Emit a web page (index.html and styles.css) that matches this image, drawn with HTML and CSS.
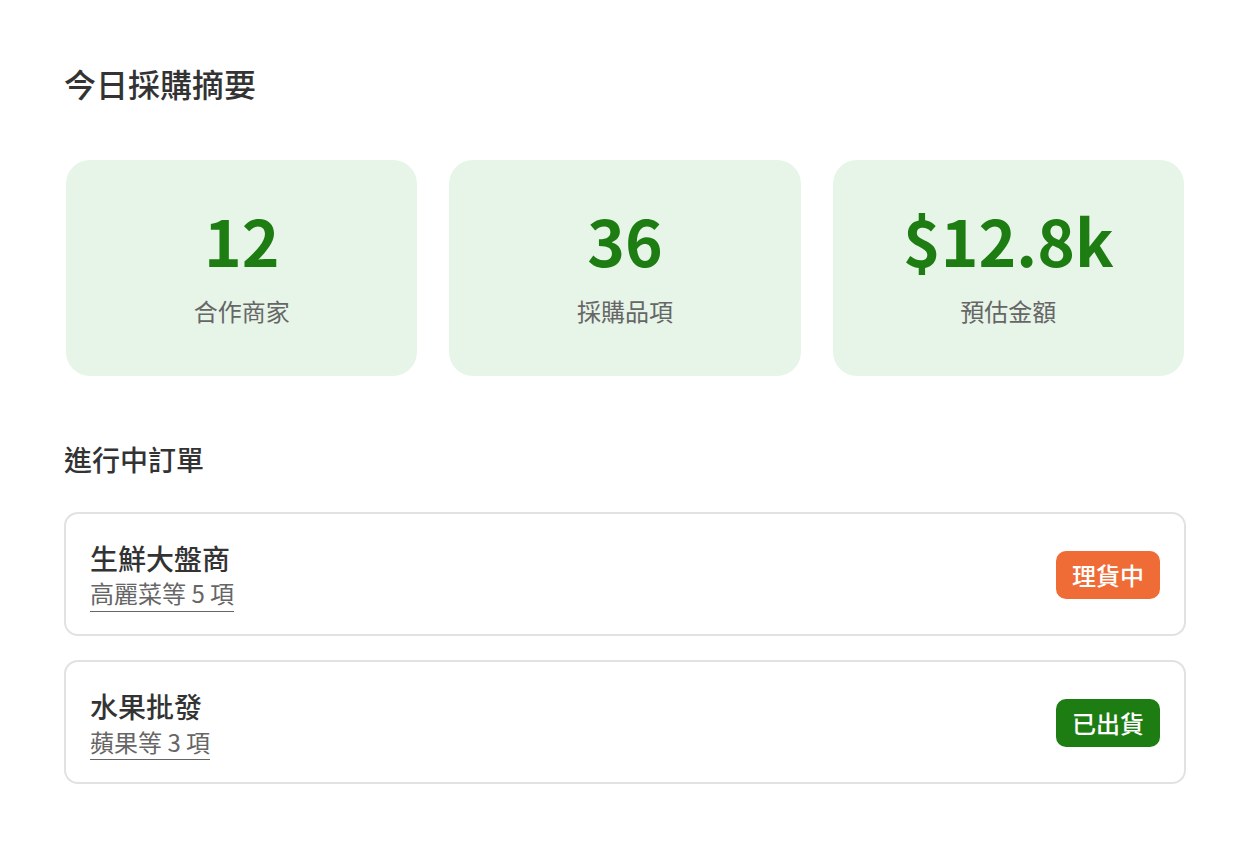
FILE: index.html
```html
<!DOCTYPE html>
<html lang="zh-Hant">
<head>
<meta charset="utf-8">
<title>今日採購摘要</title>
<link rel="stylesheet" href="styles.css">
</head>
<body>
<main class="page">
  <h1 class="title">今日採購摘要</h1>
  <section class="stats">
    <div class="stat">
      <div class="stat-value">12</div>
      <div class="stat-label">合作商家</div>
    </div>
    <div class="stat">
      <div class="stat-value">36</div>
      <div class="stat-label">採購品項</div>
    </div>
    <div class="stat">
      <div class="stat-value">$12.8k</div>
      <div class="stat-label">預估金額</div>
    </div>
  </section>
  <h2 class="section-title">進行中訂單</h2>
  <section class="orders">
    <div class="order">
      <div class="order-info">
        <div class="order-name">生鮮大盤商</div>
        <div class="order-items">高麗菜等 5 項</div>
      </div>
      <span class="badge badge-packing">理貨中</span>
    </div>
    <div class="order">
      <div class="order-info">
        <div class="order-name">水果批發</div>
        <div class="order-items">蘋果等 3 項</div>
      </div>
      <span class="badge badge-shipped">已出貨</span>
    </div>
  </section>
</main>
</body>
</html>
```

FILE: styles.css
```css
* { box-sizing: border-box; }
html, body { margin: 0; padding: 0; background: #ffffff; }
body {
  font-family: "Noto Sans CJK TC", "Noto Sans", sans-serif;
  color: #333333;
}
.page {
  padding: 64px 64px;
}
.title {
  margin: 0 0 58px 0;
  font-size: 32px;
  line-height: 1.2;
  font-weight: 500;
  color: #333333;
}
.stats {
  display: grid;
  grid-template-columns: repeat(3, 1fr);
  gap: 32px;
  padding: 0 2px;
}
.stat {
  background: #e6f5e8;
  border-radius: 24px;
  height: 216px;
  padding-bottom: 8px;
  display: flex;
  flex-direction: column;
  align-items: center;
  justify-content: center;
  gap: 16px;
}
.stat-value {
  font-size: 64px;
  line-height: 1.2;
  font-weight: 700;
  color: #1e7d12;
}
.stat-label {
  font-size: 24px;
  line-height: 1.4;
  color: #666666;
}
.section-title {
  margin: 64px 0 32px 0;
  font-size: 28px;
  line-height: 1.4;
  font-weight: 500;
  color: #333333;
}
.orders {
  display: flex;
  flex-direction: column;
  gap: 24px;
}
.order {
  display: flex;
  align-items: center;
  justify-content: space-between;
  border: 2px solid #e2e2e2;
  border-radius: 14px;
  padding: 26px 24px 22px 24px;
}
.order-name {
  font-size: 28px;
  line-height: 1.35;
  font-weight: 500;
  color: #333333;
}
.order-items {
  display: inline-block;
  font-size: 24px;
  line-height: 1.35;
  padding-bottom: 1px;
  color: #666666;
  border-bottom: 1.5px solid #666666;
}
.badge {
  font-size: 24px;
  line-height: 48px;
  height: 48px;
  padding: 0 16px;
  border-radius: 10px;
  color: #ffffff;
  font-weight: 500;
  margin-bottom: 2px;
}
.badge-packing { background: #ef6c37; }
.badge-shipped { background: #1e7d12; }
```
